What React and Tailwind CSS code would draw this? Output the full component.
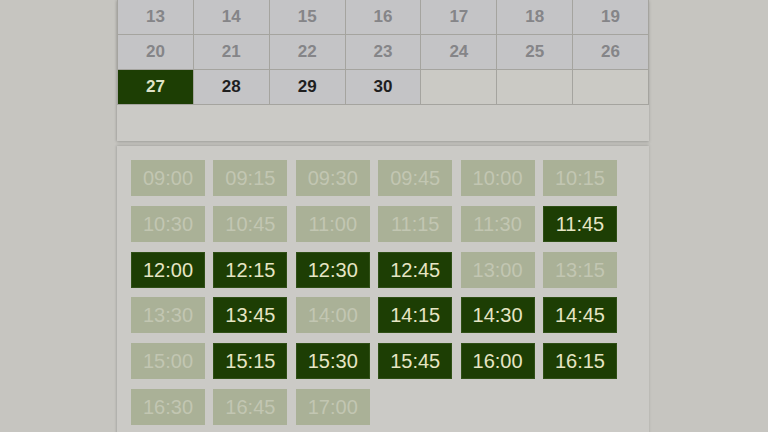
import React from 'react';

// ─── Data ───────────────────────
const WEEKS = [
  [13, 14, 15, 16, 17, 18, 19].map((d) => ({ d, state: 'past' })),
  [20, 21, 22, 23, 24, 25, 26].map((d) => ({ d, state: 'past' })),
  [
    { d: 27, state: 'selected' },
    { d: 28, state: 'open' },
    { d: 29, state: 'open' },
    { d: 30, state: 'open' },
    { d: null, state: 'empty' },
    { d: null, state: 'empty' },
    { d: null, state: 'empty' },
  ],
];

const FREE = ['11:45', '12:00', '12:15', '12:30', '12:45', '13:45', '14:15', '14:30', '14:45', '15:15', '15:30', '15:45', '16:00', '16:15'];

const SLOTS = [];
for (let m = 9 * 60; m <= 17 * 60; m += 15) {
  const label = String(Math.floor(m / 60)).padStart(2, '0') + ':' + String(m % 60).padStart(2, '0');
  SLOTS.push({ label, free: FREE.includes(label) });
}

const cellClass = {
  past: 'bg-[#c4c4c6] text-[#858588]',
  open: 'bg-[#c4c4c6] text-[#1f1f1f]',
  selected: 'bg-[#1d3e04] text-[#dfe3c8]',
  empty: 'bg-[#cbcac5]',
};

export default function App() {
  return (
    <div className="w-[768px] h-[432px] overflow-hidden bg-[#c6c5c0] font-['Liberation_Sans',Arial,sans-serif]">
      <div className="ml-[117px] w-[532px]">
        {/* calendar */}
        <div className="bg-[#cbcac6] shadow-[0_1px_3px_rgba(0,0,0,0.18),-1px_0_2px_rgba(0,0,0,0.08)]">
          <div className="grid grid-cols-7 border-l border-[#a5a49f]">
            {WEEKS.flat().map((c, i) => (
              <div
                key={i}
                className={`h-[35px] border-r border-b border-[#a5a49f] flex items-center justify-center text-[17px] font-bold ${cellClass[c.state]}`}
              >
                {c.d}
              </div>
            ))}
          </div>
          <div className="h-[36px]" />
        </div>

        {/* time slots */}
        <div className="mt-[5px] bg-[#cbcac6] px-[14px] pt-[14px] pb-[20px] shadow-[0_-1px_3px_rgba(0,0,0,0.12),-1px_0_2px_rgba(0,0,0,0.08)]">
          <div className="grid grid-cols-[repeat(6,74px)] gap-x-[8.4px] gap-y-[9.8px]">
            {SLOTS.map((s) => (
              <div
                key={s.label}
                className={
                  s.free
                    ? 'h-[36px] flex items-center justify-center text-[20px] bg-[#1d3e04] border border-[#2f4f16] text-[#e6e5c4]'
                    : 'h-[36px] flex items-center justify-center text-[20px] bg-[#aab197] text-[#c2c6b2]'
                }
              >
                {s.label}
              </div>
            ))}
          </div>
        </div>
      </div>
    </div>
  );
}
